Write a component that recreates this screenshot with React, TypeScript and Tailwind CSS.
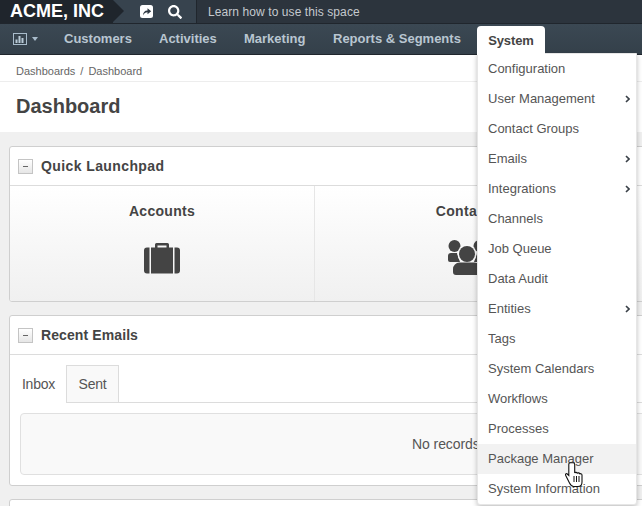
import { FaSearch } from "react-icons/fa";

const menu: [string, boolean][] = [
  ["Configuration", false],
  ["User Management", true],
  ["Contact Groups", false],
  ["Emails", true],
  ["Integrations", true],
  ["Channels", false],
  ["Job Queue", false],
  ["Data Audit", false],
  ["Entities", true],
  ["Tags", false],
  ["System Calendars", false],
  ["Workflows", false],
  ["Processes", false],
  ["Package Manager", false],
  ["System Information", false],
];

function Chevron() {
  return (
    <svg width="5" height="8" viewBox="0 0 5 8" className="absolute left-[147px] top-[11px]">
      <path d="M1 1l3 3-3 3" fill="none" stroke="#3a4148" strokeWidth="1.6" />
    </svg>
  );
}

function Collapse() {
  return (
    <div className="flex h-[15px] w-[15px] items-center justify-center border border-[#c4c4c4] bg-gradient-to-b from-white to-[#e6e6e6]">
      <div className="h-px w-[5px] bg-[#666]" />
    </div>
  );
}

function Panel({ title, tracking, children }: { title?: string; tracking?: string; children: React.ReactNode }) {
  return (
    <div className="w-[915px] overflow-hidden rounded-[3px] border border-[#cfcfcf] bg-white">
      <div className="flex h-[39px] items-center gap-[8px] border-b border-[#dcdcdc] pl-[8px]">
        <Collapse />
        {title && <span className={`text-[14px] font-bold text-[#444] ${tracking}`}>{title}</span>}
      </div>
      {children}
    </div>
  );
}

function Launch({ label, icon }: { label?: string; icon?: React.ReactNode }) {
  return (
    <div className="flex h-[115px] w-[305px] shrink-0 flex-col items-center border-r border-[#e6e6e6] bg-gradient-to-b from-white to-[#f0f0f0] pt-[16px]">
      <span className="h-[18px] text-[14px] leading-[18px] font-bold tracking-[0.3px] text-[#444]">{label}</span>
      <div className="mt-[20px] flex h-[35px] items-center justify-center">{icon}</div>
    </div>
  );
}

function People() {
  return (
    <svg width="38" height="35" viewBox="0 0 38 35" fill="#444">
      <circle cx="6.500" cy="6" r="6" />
      <circle cx="31.500" cy="6" r="6" />
      <path d="M0 16a3 3 0 0 1 3-3h6l3 9H2a2 2 0 0 1-2-2z" />
      <path d="M38 16a3 3 0 0 0-3-3h-6l-3 9h10a2 2 0 0 0 2-2z" />
      <circle cx="19" cy="14" r="9.500" fill="#fafafa" />
      <circle cx="19" cy="14" r="8" />
      <path d="M4 35V29a7 7 0 0 1 7-7h16a7 7 0 0 1 7 7v6z" fill="#f6f6f6" />
      <path d="M5 32V29a6.500 6.500 0 0 1 6.500-6.500h15A6.500 6.500 0 0 1 33 29v3a3 3 0 0 1-3 3H8a3 3 0 0 1-3-3z" />
    </svg>
  );
}

export default function App() {
  return (
    <div className="relative h-[506px] w-[642px] overflow-hidden bg-[#f0f0f0] font-['Liberation_Sans',Arial,sans-serif]">
      <div className="flex h-[24px] items-stretch border-b border-[#20262d] bg-[#2c343d]">
        <div className="relative flex w-[113px] items-center bg-[#1f252c] pl-[10px] text-[18px] font-bold whitespace-nowrap text-white">
          ACME, INC
          <div className="absolute left-full top-0 border-y-[11.5px] border-l-[11px] border-y-transparent border-l-[#1f252c]" />
        </div>
        <div className="flex w-[84px] items-center gap-[15px] border-r border-[#20262d] bg-[#37434e] pl-[27px] text-white">
          <svg width="13" height="13" viewBox="0 0 13 13">
            <rect width="13" height="13" rx="2.500" fill="#fff" />
            <path d="M3 10.500C3 7.500 4.500 5.500 7.500 5.500V3.200L11.200 6.300 7.500 9.300V7.300C5.500 7.300 4.200 8.500 3 10.500z" fill="#2f3943" />
          </svg>
          <FaSearch size={14} />
        </div>
        <div className="flex items-center pl-[11px] text-[12px] tracking-[0.085px] text-[#c4c9ce]">Learn how to use this space</div>
      </div>
      <div className="flex h-[31px] items-center border-b border-[#20262d] bg-gradient-to-b from-[#3b4853] to-[#34404a] text-[13px] font-bold text-[#b9c6d1]">
        <div className="flex w-[64px] items-center pl-[13px]">
          <svg width="14" height="12" viewBox="0 0 14 12">
            <rect x="0.500" y="0.500" width="13" height="11" fill="none" stroke="#a9bccb" />
            <path d="M2.500 10V6.500h2V10zM5.500 10V3h2v7zM8.500 10V5h2v5z" fill="#b9cad6" />
          </svg>
          <div className="ml-[5px] border-x-[3px] border-t-[4px] border-x-transparent border-t-[#a9bccb]" />
        </div>
        <span className="w-[95px]">Customers</span>
        <span className="w-[85px]">Activities</span>
        <span className="w-[89px]">Marketing</span>
        <span>Reports &amp; Segments</span>
      </div>
      <div className="flex h-[27px] gap-[5px] border-b border-[#ededed] bg-white pl-[16px] pt-[10px] text-[11px] leading-[13px] text-[#666]">
        <span>Dashboards</span>
        <span>/</span>
        <span>Dashboard</span>
      </div>
      <div className="flex h-[50px] items-center bg-white pb-[2px] pl-[16px] text-[20px] font-bold text-[#444]">Dashboard</div>

      <div className="flex flex-col gap-[13px] pl-[9px] pt-[14px]">
        <Panel title="Quick Launchpad" tracking="tracking-[0.4px]">
          <div className="flex">
            <Launch
              label="Accounts"
              icon={
                <svg width="36" height="32" viewBox="0 0 36 32" fill="#444">
                  <path d="M11 7V2.500A1.500 1.500 0 0 1 12.500 1h11A1.500 1.500 0 0 1 25 2.500V7h-2.500V3.500h-9V7z" />
                  <rect x="7" y="5.500" width="22" height="26" />
                  <path d="M5.500 5.500V31.500H3a3 3 0 0 1-3-3v-20a3 3 0 0 1 3-3zM30.500 5.500V31.500H33a3 3 0 0 0 3-3v-20a3 3 0 0 0-3-3z" />
                </svg>
              }
            />
            <Launch label="Contacts" icon={<People />} />
            <Launch />
          </div>
        </Panel>
        <Panel title="Recent Emails" tracking="tracking-[0.1px]">
          <div className="h-[130px] pt-[10px]">
            <div className="flex h-[38px] border-b border-[#dcdcdc] text-[14px] tracking-[-0.2px] text-[#555]">
              <div className="-mb-px flex h-[38px] w-[56px] items-center justify-center bg-white pl-[1px]">Inbox</div>
              <div className="flex h-[37px] w-[53px] items-center justify-center border-x border-t border-[#dcdcdc] bg-[#f9f9f9]">Sent</div>
            </div>
            <div className="ml-[10px] mt-[10px] flex h-[62px] w-[894px] items-center justify-center rounded-[4px] border border-[#e0e0e0] bg-[#f9f9f9] pr-[4px] text-[14px] tracking-[-0.1px] text-[#555]">
              No records found
            </div>
          </div>
        </Panel>
        <Panel>
          <div className="h-10" />
        </Panel>
      </div>

      <div className="absolute left-[477px] top-[26px] z-20 flex h-[29px] w-[68px] items-center justify-center rounded-t-[4px] bg-white text-[13px] font-bold tracking-[-0.1px] text-[#444]">
        System
      </div>
      <div className="absolute left-[477px] top-[53px] z-10 w-[160px] rounded-b-[3px] border border-[#e6e6e6] bg-white shadow-[0_2px_5px_rgba(0,0,0,0.25)]">
        {menu.map(([label, sub], i) => (
          <div
            key={label}
            className={`relative flex h-[30px] items-center pl-[10px] text-[13px] text-[#555] ${i === 13 ? "bg-[#f2f2f2]" : ""}`}
          >
            {label}
            {sub && <Chevron />}
          </div>
        ))}
      </div>
      <svg className="absolute left-[565px] top-[462px] z-30" width="18" height="26" viewBox="0 0 18 26">
        <path
          d="M5.500 .7c-1 0-1.700.8-1.700 1.800v11L2.300 12c-1-.9-2.300 0-1.700 1.300L4.500 21c.8 1.500 2 3.500 4 3.500h4.500c2.500 0 4-1.800 4-4.500v-7c0-1.500-1.800-1.800-2.300-.8 0-1.500-2-1.800-2.500-.6 0-1.400-2-1.700-2.500-.5V2.500c0-1-.7-1.800-1.700-1.800z"
          fill="#fff"
          stroke="#111"
          strokeWidth="1.100"
        />
        <path d="M9 14v6M11.500 14v6M14 14v6" stroke="#111" strokeWidth="1" />
      </svg>
    </div>
  );
}
